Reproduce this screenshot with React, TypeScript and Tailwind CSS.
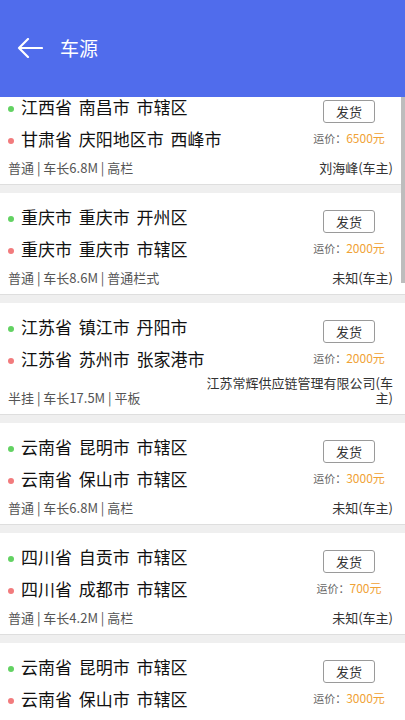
import React from "react";

interface Source {
  from: string;
  to: string;
  specs: string;
  price: string;
  owner: string;
}

const sources: Source[] = [
  { from: "江西省 南昌市 市辖区", to: "甘肃省 庆阳地区市 西峰市", specs: "普通 | 车长6.8M | 高栏", price: "6500元", owner: "刘海峰(车主)" },
  { from: "重庆市 重庆市 开州区", to: "重庆市 重庆市 市辖区", specs: "普通 | 车长8.6M | 普通栏式", price: "2000元", owner: "未知(车主)" },
  { from: "江苏省 镇江市 丹阳市", to: "江苏省 苏州市 张家港市", specs: "半挂 | 车长17.5M | 平板", price: "2000元", owner: "江苏常辉供应链管理有限公司(车主)" },
  { from: "云南省 昆明市 市辖区", to: "云南省 保山市 市辖区", specs: "普通 | 车长6.8M | 高栏", price: "3000元", owner: "未知(车主)" },
  { from: "四川省 自贡市 市辖区", to: "四川省 成都市 市辖区", specs: "普通 | 车长4.2M | 高栏", price: "700元", owner: "未知(车主)" },
  { from: "云南省 昆明市 市辖区", to: "云南省 保山市 市辖区", specs: "普通 | 车长6.8M | 高栏", price: "3000元", owner: "未知(车主)" },
];

function SourceCard({ item }: { item: Source }) {
  return (
    <div className="bg-white border-b border-[#dedede] pl-[8px] pr-[12px] pb-[9px]">
      <div className="flex h-[72px]">
        <div className="flex-1 pt-[8px] text-[17px] text-[#111] [word-spacing:3px]">
          <div className="flex items-center h-[32px]">
            <span className="w-[6px] h-[6px] rounded-full bg-[#62d262] mt-[3px] mr-[7px] shrink-0" />
            <span className="whitespace-nowrap">{item.from}</span>
          </div>
          <div className="flex items-center h-[32px]">
            <span className="w-[6px] h-[6px] rounded-full bg-[#f27b7d] mt-[3px] mr-[7px] shrink-0" />
            <span className="whitespace-nowrap">{item.to}</span>
          </div>
        </div>
        <div className="w-[88px] flex flex-col items-center pt-[17px]">
          <button className="w-[52px] h-[23px] border border-[#9a9a9a] rounded-[3px] text-[13px] text-[#333] leading-none flex items-center justify-center">
            发货
          </button>
          <div className="mt-[8px] flex items-baseline leading-[14px] whitespace-nowrap">
            <span className="text-[11px] text-[#666]">运价：</span>
            <span className="text-[12px] text-[#f0a235]">{item.price}</span>
          </div>
        </div>
      </div>
      <div className="flex justify-between items-end min-h-[20px] leading-[15px]">
        <span className="text-[13px] text-[#555] whitespace-nowrap">{item.specs}</span>
        <span className="text-[13px] text-[#333] text-right max-w-[190px]">{item.owner}</span>
      </div>
    </div>
  );
}

export default function App() {
  return (
    <div
      className="relative w-[405px] h-[720px] overflow-hidden flex flex-col bg-[#efefef]"
      style={{ fontFamily: '"Noto Sans CJK SC", "Noto Sans", sans-serif' }}
    >
      <div className="h-[97px] shrink-0 bg-[#506cec] flex items-center pl-[17px] z-10">
        <svg width="26" height="20" viewBox="0 0 26 20" fill="none" className="mt-[-1px]">
          <path d="M25 10H2M11 1L2 10l9 9" stroke="white" strokeWidth="2.2" strokeLinecap="round" strokeLinejoin="round" />
        </svg>
        <span className="ml-[17px] text-[19px] text-white">车源</span>
      </div>
      <div className="flex-1 overflow-hidden">
        <div className="mt-[-14px] flex flex-col gap-[8px]">
          {sources.map((s, i) => (
            <SourceCard key={i} item={s} />
          ))}
        </div>
      </div>
      <div className="absolute right-0 top-[97px] w-[4px] h-[186px] bg-[#bdbdbd]" />
    </div>
  );
}
